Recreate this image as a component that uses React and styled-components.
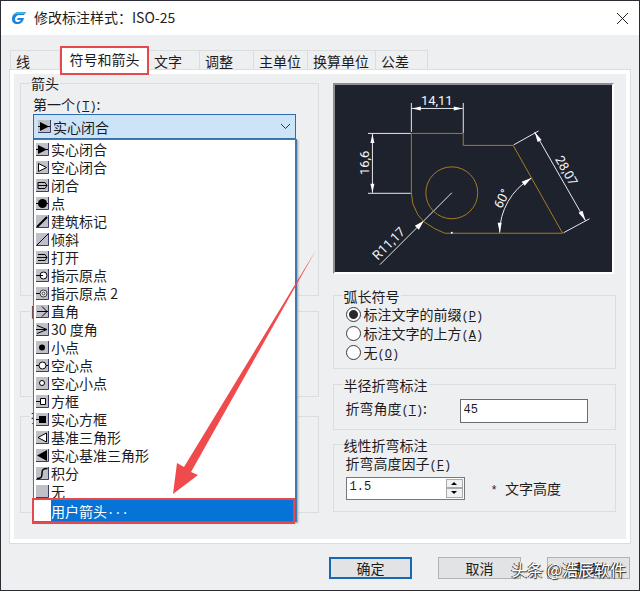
import React, { useState } from "react";
import styled, { createGlobalStyle, css } from "styled-components";

const GlobalStyle = createGlobalStyle`
  * {
    box-sizing: border-box;
    margin: 0;
    padding: 0;
  }

  body {
    background: #eeeff1;
  }

  body,
  button,
  input,
  select {
    font-family: "Noto Sans CJK SC", sans-serif;
    font-size: 14px;
    line-height: 18px;
    color: #1c1c1e;
  }
`;

const Dialog = styled.main`
  position: relative;
  display: flex;
  flex-direction: column;
  min-height: 100vh;
  border: 1px solid #2c2a33;
  background: #eeeff1;
  overflow: hidden;
`;

const TitleBar = styled.header`
  display: flex;
  align-items: center;
  height: 34px;
  padding: 0 10px;
  background: #fff;

  h1 {
    flex: 1;
    margin-left: 7px;
    padding-bottom: 2px;
    font-size: 14px;
    font-weight: 400;
  }
`;

const CloseButton = styled.button`
  display: flex;
  border: none;
  background: none;
  cursor: pointer;
`;

const TabList = styled.div`
  display: flex;
  height: 20px;
  margin: 15px 0 0 9px;
`;

const Tab = styled.button`
  width: ${({ $width }) => $width}px;
  padding: 0 0 0 5px;
  border: 1px solid #dcdddf;
  border-width: 1px 1px 0 0;
  background: none;
  text-align: left;
  white-space: nowrap;
  cursor: pointer;

  &:first-child {
    border-left-width: 1px;
  }

  ${({ $active }) =>
    $active &&
    css`
      z-index: 1;
      margin: -4px 0 -5px;
      padding: 0 0 3px;
      border: 2px solid #e5484d;
      background: #fff;
      text-align: center;
    `}
`;

const TabPage = styled.section`
  display: grid;
  grid-template-columns: 298fr 283fr;
  gap: 14px;
  margin: 0 9px;
  padding: 0 10px 26px 6px;
  border: 4px solid #fff;
  outline: 1px solid #dcdddf;
`;

const Column = styled.div`
  display: flex;
  flex-direction: column;
`;

const Group = styled.fieldset`
  min-width: 0;
  height: ${({ $height }) => $height}px;
  margin-top: ${({ $top }) => $top}px;
  padding: 0 12px;
  border: 1px solid #dcdddf;

  legend {
    margin-left: -3px;
    padding: 0 1px;
  }
`;

const HalfWidth = styled.span`
  font-family: "Liberation Mono", monospace;
  font-size: 12px;
  line-height: 1;
  white-space: pre;
`;

const ComboLabel = styled.label`
  display: block;
  height: 22px;
  padding-top: 3px;
`;

const Combo = styled.div`
  position: relative;
  display: flex;
  align-items: center;
  height: 25px;
  margin-right: 10px;
  padding: 0 4px;
  border: 1px solid #2f6cab;
  background: #cce4f8;

  select {
    flex: 1;
    height: 20px;
    margin-left: 2px;
    border: none;
    outline: none;
    appearance: none;
    background: none;
    line-height: 18px;
  }
`;

const Options = styled.ul`
  position: absolute;
  z-index: 2;
  top: 24px;
  left: -1px;
  right: -2px;
  border: 1px solid #2f7fc4;
  border-right: 2px solid #3f78ad;
  background: #fff;
  box-shadow: 1px 1px 2px #9a9ca0;
  list-style: none;
`;

const Option = styled.li`
  display: flex;
  align-items: center;
  gap: 2px;
  height: 18px;
  padding-left: 2px;
  line-height: 16px;
  white-space: pre;
  cursor: default;
`;

const CustomOption = styled(Option)`
  position: relative;
  gap: 0;
  height: 21px;
  padding-left: 17px;
  background: linear-gradient(to right, #fff 17px, #0674d6 17px);
  color: #fff;

  &::after {
    content: "";
    position: absolute;
    inset: -2px 0 -3px -2px;
    border: 2px solid #e5484d;
  }
`;

const Pointer = styled.svg`
  position: absolute;
  z-index: 3;
  top: 134px;
  left: 138px;
  pointer-events: none;
`;

const Preview = styled.div`
  margin: 9px 2px 0 0;
  border: 2px solid #8c8e92;
  border-right-color: #fff;
  border-bottom-color: #fff;
  background: #1d222d;

  svg {
    display: block;
    width: 100%;
  }

  text {
    fill: #f4f5f7;
    font-family: Roboto, sans-serif;
    font-size: 13px;
    text-anchor: middle;
  }
`;

const RadioRow = styled.label`
  display: flex;
  align-items: center;
  gap: 3px;
  height: 19px;
  white-space: nowrap;

  input {
    appearance: none;
    width: 15px;
    height: 15px;
    border: 1px solid #3a3a3c;
    border-radius: 50%;
    background: #fff;
  }

  input:checked {
    background: radial-gradient(circle, #2a2a2c 4px, #fff 5px);
  }
`;

const Field = styled.div`
  display: flex;
  padding-top: 5px;

  label {
    width: 114px;
    white-space: nowrap;
  }
`;

const TextInput = styled.input`
  width: 128px;
  height: 24px;
  padding: 0 3px 2px;
  border: 1px solid #6b6c70;
  background: #fff;
  font-family: "Liberation Mono", monospace;
  font-size: 12px;
`;

const SpinnerRow = styled.div`
  display: flex;
  align-items: center;
  gap: 26px;
  padding-top: 5px;
`;

const Spinner = styled.div`
  display: flex;
  width: 119px;
  height: 23px;
  padding: 1px;
  border: 1px solid #77787c;
  background: #fff;

  input {
    flex: 1;
    min-width: 0;
    padding: 0 2px 2px;
    border: none;
    font-family: "Liberation Mono", monospace;
    font-size: 12px;
  }
`;

const SpinButtons = styled.div`
  display: grid;
  width: 17px;

  button {
    display: flex;
    align-items: center;
    justify-content: center;
    border: 1px solid #a9aaae;
    background: #f0f1f2;
  }
`;

const Footer = styled.footer`
  display: flex;
  justify-content: flex-end;
  gap: 26px;
  margin-top: 14px;
  padding-right: 9px;
`;

const PushButton = styled.button`
  width: 83px;
  height: 22px;
  border: ${({ $primary }) => ($primary ? "2px solid #1668b5" : "1px solid #b2b3b6")};
  background: #e2e3e5;
  line-height: 16px;
`;

const Watermark = styled.p`
  position: absolute;
  right: 13px;
  bottom: 9px;
  color: #fff;
  font-size: 16px;
  line-height: 24px;
  text-shadow: -1px 0 0 #222, 1px 1px 1px #222;
`;

// what is drawn on each 13px arrowhead tile
const glyphs = {
  closedFilled: (
    <>
      <path d="M0 6.5h13" stroke="#000" />
      <path d="M2 2l9 4.5L2 11z" fill="#000" />
    </>
  ),
  closedBlank: <path d="M2.5 2.5l8 4-8 4z" fill="#fff" stroke="#000" />,
  closed: <path d="M2 3.5h7l2 3-2 3H2zM2 6.5h9" fill="none" stroke="#000" />,
  dot: (
    <>
      <path d="M0 6.5h13" stroke="#000" />
      <circle cx="6.5" cy="6.5" r="4.5" fill="#000" />
    </>
  ),
  tick: <path d="M1 12L11 2" stroke="#000" strokeWidth="2" />,
  oblique: <path d="M1 12L12 1" stroke="#000" />,
  open: <path d="M2 3.5h7l2 3-2 3H2M1 6.5h10" fill="none" stroke="#000" />,
  origin: (
    <>
      <circle cx="7.5" cy="6.5" r="3.5" fill="#fff" stroke="#000" />
      <path d="M0 6.5h7" stroke="#000" />
    </>
  ),
  origin2: (
    <>
      <path d="M0 6.5h4" stroke="#000" />
      <circle cx="7.5" cy="6.5" r="3.5" fill="#fff" stroke="#333" />
      <circle cx="7.5" cy="6.5" r="1.5" fill="none" stroke="#333" />
    </>
  ),
  rightAngle: <path d="M1 6.5h11M6 1.5l5 5-5 5" fill="none" stroke="#000" />,
  angle30: <path d="M1 2.5l10 4-10 4M0 6.5h11" fill="none" stroke="#000" />,
  dotSmall: <circle cx="6" cy="6.5" r="3" fill="#000" />,
  dotBlank: (
    <>
      <circle cx="6.5" cy="6.5" r="3.5" fill="#fff" stroke="#000" />
      <path d="M0 6.5h3M10 6.5h2" stroke="#000" />
    </>
  ),
  dotSmallBlank: <circle cx="6" cy="6" r="2.5" fill="#fff" stroke="#000" />,
  box: (
    <>
      <path d="M0 6.5h4" stroke="#000" />
      <path d="M4.5 3.5h5v6h-5z" fill="#fff" stroke="#000" />
    </>
  ),
  boxFilled: (
    <>
      <path d="M0 6.5h4" stroke="#000" />
      <path d="M3 3h7v7H3z" fill="#000" />
    </>
  ),
  datum: <path d="M10.5 2L2 6.5l8.5 4.5z" fill="#fff" stroke="#000" />,
  datumFilled: <path d="M11 1L1 6.5 11 12z" fill="#000" />,
  integral: (
    <path d="M1 11.5c4 0 5-1 5-5s1-5 5.5-5" fill="none" stroke="#000" strokeWidth="1.5" />
  ),
  none: null,
};

const arrowheads = [
  ["closedFilled", "实心闭合"],
  ["closedBlank", "空心闭合"],
  ["closed", "闭合"],
  ["dot", "点"],
  ["tick", "建筑标记"],
  ["oblique", "倾斜"],
  ["open", "打开"],
  ["origin", "指示原点"],
  ["origin2", "指示原点 2"],
  ["rightAngle", "直角"],
  ["angle30", "30 度角"],
  ["dotSmall", "小点"],
  ["dotBlank", "空心点"],
  ["dotSmallBlank", "空心小点"],
  ["box", "方框"],
  ["boxFilled", "实心方框"],
  ["datum", "基准三角形"],
  ["datumFilled", "实心基准三角形"],
  ["integral", "积分"],
  ["none", "无"],
];

const tabs = [
  ["线", 50],
  ["符号和箭头", 89],
  ["文字", 51],
  ["调整", 54],
  ["主单位", 54],
  ["换算单位", 68],
  ["公差", 52],
];

const arcOptions = [
  ["标注文字的前缀", "P"],
  ["标注文字的上方", "A"],
  ["无", "O"],
];

const ArrowheadIcon = ({ name }) => (
  <svg width="13" height="13" viewBox="0 0 13 13">
    <path d="M0 0h13v13H0z" fill="#bfc0c8" />
    {glyphs[name]}
    <path d="M0 12.5h12.5V0" fill="none" stroke="#3c3c6c" />
  </svg>
);

const Key = ({ children }) => (
  <HalfWidth>
    (<u>{children}</u>)
  </HalfWidth>
);

const Logo = () => (
  <svg width="16" height="16" viewBox="0 0 16 16">
    <path
      d="M15 2H8C4 2 1 5 1 9c0 3 2 5 5 5 4 0 6-2 7-6H7L6 10h4c-1 1-2 2-3.5 2C5 12 4 11 4 9c0-2 2-4 4-4h5z"
      fill="#1a84dc"
    />
    <path d="M15 2H8C5 2 3 3.5 2 5.5 4 4 6 4 8 4h6z" fill="#3fb4ee" />
  </svg>
);

const DimensionPreview = () => (
  <Preview>
    <svg viewBox="10 10 278 187">
      <g fill="none" stroke="#e8e9ec">
        <path d="M86.5 28v29M138.500 28v30M87 33.500h51" />
        <path d="M43 58.5h43M43 118.5h43M47.5 59v59" />
        <path d="M189 70l25-14M239 158l26-14M210 57l51 89" />
        <path d="M127 118l-72 72" />
        <path d="M175 158a63 63 0 0 1 31.5-54.5" />
      </g>
      <g fill="none" stroke="#a67c1f">
        <path d="M86.5 118V58.5h52v12h50L238 158.5H120l-10-4.5-11-7-6-7-5-11z" />
        <circle cx="127" cy="118" r="26" />
      </g>
      <g fill="#fff">
        <path d="M87 33.5l9-2v4zM138 33.5l-9-2v4z" />
        <path d="M47.5 59l-2 9h4zM47.5 118l-2-9h4z" />
        <path d="M210 57l3 10 4-2zM261 146l-7-8 4-2z" />
        <path d="M99 146l-9 5 4 4zM175 158l-2-10h4zM207 103l-10 4 3 4z" />
        <circle cx="127" cy="158" r="1" />
      </g>
      <text x="112" y="30">14,11</text>
      <text transform="translate(44 88) rotate(-90)">16,6</text>
      <text transform="translate(181 126) rotate(-62)">60°</text>
      <text transform="translate(238 98) rotate(60)">28,07</text>
      <text transform="translate(67 172) rotate(-45)">R11,17</text>
    </svg>
  </Preview>
);

const ArrowheadCombo = () => {
  const [value, setValue] = useState("closedFilled");

  return (
    <>
      <ComboLabel htmlFor="first-arrow">
        第一个
        <Key>T</Key>:
      </ComboLabel>
      <Combo>
        <ArrowheadIcon name={value} />
        <select
          id="first-arrow"
          value={value}
          onChange={(e) => setValue(e.target.value)}
        >
          {arrowheads.map(([name, label]) => (
            <option key={name} value={name}>
              {label}
            </option>
          ))}
        </select>
        <svg width="11" height="7" viewBox="0 0 11 7">
          <path d="M1 1l4.5 4.5L10 1" fill="none" stroke="#333" />
        </svg>
        <Options role="listbox" aria-label="第一个">
          {arrowheads.map(([name, label]) => (
            <Option
              key={name}
              role="option"
              aria-selected={name === value}
              onClick={() => setValue(name)}
            >
              <ArrowheadIcon name={name} />
              {label}
            </Option>
          ))}
          <CustomOption role="option" aria-selected={false}>
            用户箭头<HalfWidth>...</HalfWidth>
          </CustomOption>
        </Options>
        <Pointer width="146" height="246" viewBox="0 0 146 246">
          <path
            d="M1 245l4-31 7 4L144 1 19 223l7 3z"
            fill="#f04b4c"
          />
        </Pointer>
      </Combo>
    </>
  );
};

const App = () => {
  const [activeTab, setActiveTab] = useState("符号和箭头");
  const [arc, setArc] = useState("P");
  const [angle, setAngle] = useState("45");
  const [factor, setFactor] = useState(1.5);

  return (
    <Dialog>
      <GlobalStyle />
      <TitleBar>
        <Logo />
        <h1>修改标注样式：ISO-25</h1>
        <CloseButton aria-label="关闭">
          <svg width="13" height="13" viewBox="0 0 13 13">
            <path d="M1 1l11 11M12 1L1 12" stroke="#222" />
          </svg>
        </CloseButton>
      </TitleBar>

      <TabList role="tablist">
        {tabs.map(([label, width]) => (
          <Tab
            key={label}
            role="tab"
            aria-selected={label === activeTab}
            $active={label === activeTab}
            $width={width}
            onClick={() => setActiveTab(label)}
          >
            {label}
          </Tab>
        ))}
      </TabList>

      <TabPage>
        <Column>
          <Group $height={222} $top={0}>
            <legend>箭头</legend>
            <ArrowheadCombo />
          </Group>
          <Group $height={95} $top={6}>
            <legend>圆心标记</legend>
          </Group>
          <Group $height={106} $top={10}>
            <legend>折断标注</legend>
          </Group>
        </Column>

        <Column>
          <DimensionPreview />
          <Group $height={82} $top={13}>
            <legend>弧长符号</legend>
            {arcOptions.map(([label, key]) => (
              <RadioRow key={key}>
                <input
                  type="radio"
                  name="arc"
                  checked={arc === key}
                  onChange={() => setArc(key)}
                />
                <span>
                  {label}
                  <Key>{key}</Key>
                </span>
              </RadioRow>
            ))}
          </Group>
          <Group $height={54} $top={7}>
            <legend>半径折弯标注</legend>
            <Field>
              <label htmlFor="angle">
                折弯角度
                <Key>T</Key>:
              </label>
              <TextInput
                id="angle"
                value={angle}
                onChange={(e) => setAngle(e.target.value)}
              />
            </Field>
          </Group>
          <Group $height={76} $top={6}>
            <legend>线性折弯标注</legend>
            <label htmlFor="factor">
              折弯高度因子
              <Key>F</Key>
            </label>
            <SpinnerRow>
              <Spinner>
                <input
                  id="factor"
                  value={factor}
                  onChange={(e) => setFactor(e.target.value)}
                />
                <SpinButtons>
                  <button
                    aria-label="增加"
                    onClick={() => setFactor(Number(factor) + 0.5)}
                  >
                    <svg width="6" height="3" viewBox="0 0 6 3">
                      <path d="M0 3l3-3 3 3z" />
                    </svg>
                  </button>
                  <button
                    aria-label="减少"
                    onClick={() => setFactor(Number(factor) - 0.5)}
                  >
                    <svg width="6" height="3" viewBox="0 0 6 3">
                      <path d="M0 0l3 3 3-3z" />
                    </svg>
                  </button>
                </SpinButtons>
              </Spinner>
              <span>
                <HalfWidth>* </HalfWidth>
                文字高度
              </span>
            </SpinnerRow>
          </Group>
        </Column>
      </TabPage>

      <Footer>
        <PushButton $primary>确定</PushButton>
        <PushButton>取消</PushButton>
        <PushButton>帮助</PushButton>
      </Footer>
      <Watermark>头条 @浩辰软件</Watermark>
    </Dialog>
  );
};

export default App;
